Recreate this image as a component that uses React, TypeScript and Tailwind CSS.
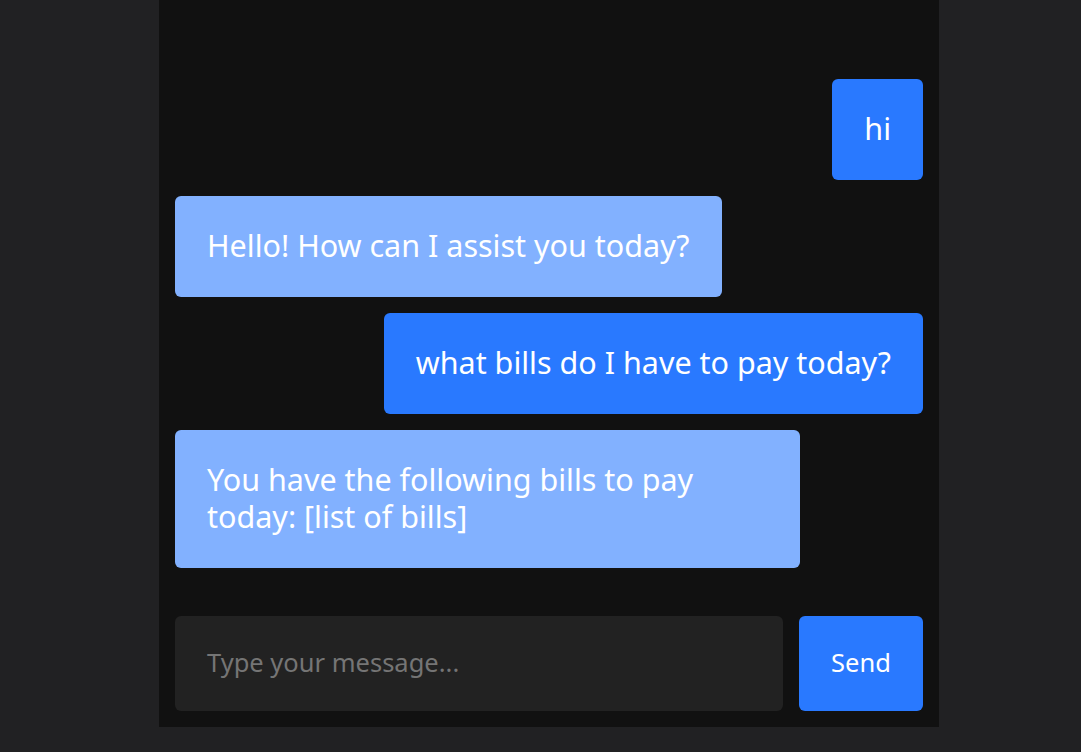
import React from "react";

type Msg = { from: "user" | "bot"; text: string };

const messages: Msg[] = [
  { from: "user", text: "hi" },
  { from: "bot", text: "Hello! How can I assist you today?" },
  { from: "user", text: "what bills do I have to pay today?" },
  { from: "bot", text: "You have the following bills to pay today: [list of bills]" },
];

export default function App() {
  return (
    <div
      className="w-full h-[752px] bg-[#212123] overflow-hidden"
      style={{ fontFamily: '"Noto Sans", "Open Sans", sans-serif' }}
    >
      <div className="ml-[159px] w-[780px] h-[727px] bg-[#111111] flex flex-col px-4 pb-4 pt-[79px]">
        <div className="flex flex-col gap-4 flex-1">
          {messages.map((m, i) => (
            <div key={i} className={m.from === "user" ? "flex justify-end" : "flex justify-start"}>
              <div
                className={
                  (m.from === "user" ? "bg-[#2979ff]" : "bg-[#82b1ff]") +
                  " max-w-[625px] rounded-md px-8 pt-[31px] pb-[33px] text-[30.5px] leading-[37px] text-white"
                }
              >
                {m.text}
              </div>
            </div>
          ))}
        </div>
        <div className="flex gap-4 h-[95px]">
          <div className="flex-1 rounded-md bg-[#222222] flex items-center px-8 pb-[2px] text-[25.5px] text-[#757575]">
            Type your message...
          </div>
          <button className="w-[124px] rounded-md bg-[#2979ff] pb-[2px] text-white text-[25.5px]">Send</button>
        </div>
      </div>
    </div>
  );
}
